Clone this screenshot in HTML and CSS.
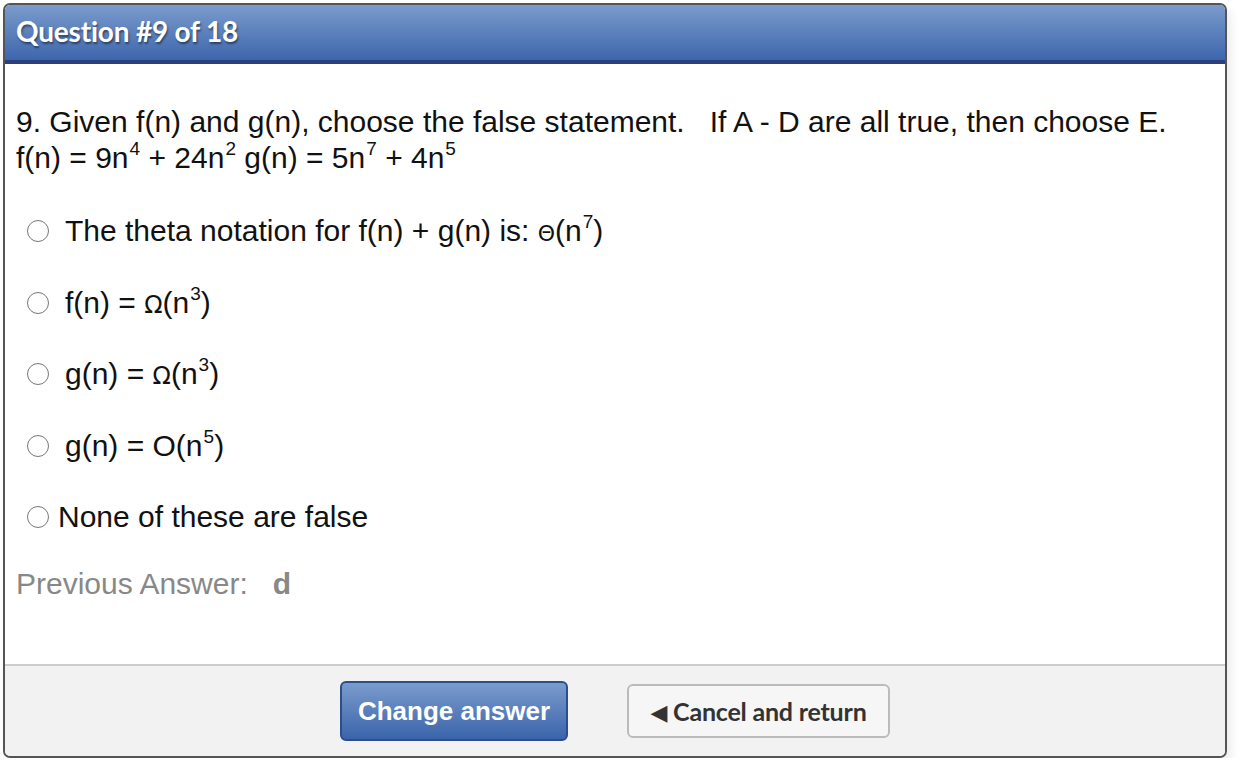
FILE: index.html
```html
<!DOCTYPE html>
<html>
<head>
<meta charset="utf-8">
<link rel="stylesheet" href="styles.css">
</head>
<body>
<div class="panel">
  <div class="header"><span class="title">Question #9 of 18</span></div>
  <div class="content">
    <div class="question">
      <div>9. Given f(n) and g(n), choose the false statement.&nbsp;&nbsp;&nbsp;If A - D are all true, then choose E.</div>
      <div>f(n) = 9n<sup>4</sup> + 24n<sup>2</sup> g(n) = 5n<sup>7</sup> + 4n<sup>5</sup></div>
    </div>
    <div class="options">
      <label class="option"><span class="radio"></span><span class="otext">The theta notation for f(n) + g(n) is: <span class="sym theta">Θ</span>(n<sup>7</sup>)</span></label>
      <label class="option"><span class="radio"></span><span class="otext">f(n) = <span class="sym">Ω</span>(n<sup>3</sup>)</span></label>
      <label class="option"><span class="radio"></span><span class="otext">g(n) = <span class="sym">Ω</span>(n<sup>3</sup>)</span></label>
      <label class="option"><span class="radio"></span><span class="otext">g(n) = O(n<sup>5</sup>)</span></label>
      <label class="option last"><span class="radio"></span><span class="otext">None of these are false</span></label>
    </div>
    <div class="previous">Previous Answer:&nbsp;&nbsp;&nbsp;<b>d</b></div>
  </div>
  <div class="footer">
    <button class="btn primary">Change answer</button>
    <button class="btn secondary"><span class="tri">◀</span> Cancel and return</button>
  </div>
</div>
</body>
</html>
```

FILE: styles.css
```css
html, body {
  margin: 0;
  padding: 0;
  background: #fff;
}
body {
  padding: 3px 0 0 3px;
  font-family: "Liberation Sans", Arial, sans-serif;
}
.panel {
  width: 1220px;
  border: 2px solid #555;
  border-radius: 7px;
  overflow: hidden;
  box-shadow: 4px 6px 10px rgba(0,0,0,0.08);
  background: #fff;
}
.header {
  height: 55px;
  background: linear-gradient(#7b9bcc, #3d66ad);
  border-bottom: 4px solid #2b3f7c;
  display: flex;
  align-items: center;
  padding-left: 11px;
}
.title {
  font-family: Lato, "Open Sans", sans-serif;
  font-weight: 700;
  font-size: 28px;
  color: #fff;
  text-shadow: 1px 2px 2px rgba(0,0,0,0.45);
  margin-top: -4px;
  letter-spacing: -0.2px;
}
.content {
  padding: 40px 11px 0;
  box-sizing: border-box;
  height: 600px;
}
.question {
  font-size: 30px;
  line-height: 36px;
  color: #111;
}
sup {
  font-size: 19px;
  line-height: 0;
  vertical-align: 0;
  position: relative;
  top: -13px;
  margin-left: 1px;
}
.options {
  margin-top: 38px;
  display: flex;
  flex-direction: column;
  gap: 37.5px;
}
.option {
  display: flex;
  align-items: center;
  font-size: 30px;
  color: #111;
  height: 34px;
}
.radio {
  width: 22px;
  height: 22px;
  border: 1.5px solid #777;
  border-radius: 50%;
  margin-left: 11px;
  margin-right: 16px;
  box-sizing: border-box;
  flex: none;
}
.option.last .radio {
  margin-left: 11px;
  margin-right: 9px;
}
.sym {
  font-size: 24px;
  font-family: "DejaVu Sans", sans-serif;
}
.theta {
  font-size: 22px;
}
.previous {
  margin-top: 33px;
  font-size: 30px;
  line-height: 34px;
  color: #888;
}
.previous b {
  color: #888;
}
.footer {
  border-top: 2px solid #ccc;
  background: #f2f2f2;
  height: 90px;
  display: flex;
  align-items: center;
  padding-left: 335px;
  gap: 59px;
}
.btn {
  border-radius: 6px;
  font-weight: 700;
  cursor: pointer;
  padding: 0;
}
.primary {
  width: 228px;
  height: 60px;
  background: linear-gradient(#7a9bcc, #3b64aa);
  border: 2px solid #2c4f8c;
  color: #fff;
  font-family: "Liberation Sans", Arial, sans-serif;
  font-size: 26px;
}
.secondary {
  width: 263px;
  height: 54px;
  background: #f6f6f6;
  border: 2px solid #bbb;
  color: #333;
  font-family: Lato, sans-serif;
  font-size: 25px;
  letter-spacing: -0.2px;
}
.tri {
  font-size: 22px;
  font-family: "DejaVu Sans", sans-serif;
  position: relative;
  top: -1px;
}
```
